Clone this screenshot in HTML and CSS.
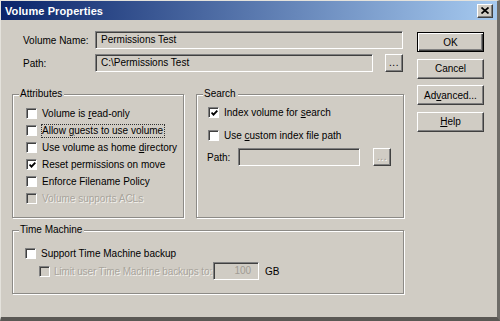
FILE: index.html
```html
<!DOCTYPE html>
<html lang="en">
<head>
    <meta charset="UTF-8">
    <title>Volume Properties</title>
    <link rel="stylesheet" href="styles.css">
</head>
<body>
    <div class="window">
        <div class="titlebar">
            <span class="title">Volume Properties</span>
            <span class="close-btn">
                <svg width="8" height="7" viewBox="0 0 8 7">
                    <path d="M0.5 0.5 L7.5 6.5 M7.5 0.5 L0.5 6.5" stroke="#000" stroke-width="1.7" fill="none"/>
                </svg>
            </span>
        </div>

        <div class="client">
            <div class="main">
                <div class="field-row">
                    <label class="field-label">Volume Name:</label>
                    <div class="textbox name-box">Permissions Test</div>
                </div>
                <div class="field-row path-row">
                    <label class="field-label">Path:</label>
                    <div class="textbox">C:\Permissions Test</div>
                    <button class="btn browse">...</button>
                </div>

                <div class="group-row">
                    <div class="group attributes">
                        <span class="group-title">Attributes</span>
                        <div class="check"><span class="box"></span><span>Volume is <u>r</u>ead-only</span></div>
                        <div class="check"><span class="box"></span><span class="focus">Allow <u>g</u>uests to use volume</span></div>
                        <div class="check"><span class="box"></span><span>Use volume as home <u>d</u>irectory</span></div>
                        <div class="check"><span class="box checked"></span><span>Reset permissions on move</span></div>
                        <div class="check"><span class="box"></span><span>Enforce Filename Policy</span></div>
                        <div class="check disabled"><span class="box"></span><span>Volume supports ACLs</span></div>
                    </div>

                    <div class="group search">
                        <span class="group-title">Search</span>
                        <div class="check"><span class="box checked"></span><span>Index volume for <u>s</u>earch</span></div>
                        <div class="check custom-path"><span class="box"></span><span>Use <u>c</u>ustom index file path</span></div>
                        <div class="search-path">
                            <label class="small-label">Path:</label>
                            <div class="textbox empty"></div>
                            <button class="btn browse" disabled>...</button>
                        </div>
                    </div>
                </div>

                <div class="group time-machine">
                    <span class="group-title">Time Machine</span>
                    <div class="check"><span class="box"></span><span>Support Time Machine backup</span></div>
                    <div class="limit-row">
                        <div class="check disabled"><span class="box"></span><span class="limit-label">Limit user Time Machine backups to:</span></div>
                        <div class="textbox number">100</div>
                        <span class="unit">GB</span>
                    </div>
                </div>
            </div>

            <div class="buttons">
                <button class="btn default">OK</button>
                <button class="btn">Cancel</button>
                <button class="btn">Ad<u>v</u>anced...</button>
                <button class="btn"><u>H</u>elp</button>
            </div>
        </div>
    </div>
</body>
</html>
```

FILE: styles.css
```css
body {
    margin: 0;
    padding: 0;
    background-color: #d0ccc4;
    font-family: "Liberation Sans", Arial, sans-serif;
    font-size: 10px;
    color: #000;
}
.window {
    width: 500px;
    height: 321px;
    box-sizing: border-box;
    background: #d0ccc4;
    border-top: 1px solid #e4e2dc;
    border-left: 1px solid #e4e2dc;
    border-right: 3px solid #6e6c68;
    border-bottom: 4px solid #5a5854;
    display: flex;
    flex-direction: column;
}
.titlebar {
    height: 19px;
    background: linear-gradient(to right, #0a246a, #a6caf0);
    display: flex;
    align-items: center;
    justify-content: space-between;
    padding: 0 4px 0 4px;
    flex-shrink: 0;
}
.title {
    color: #fff;
    font-weight: bold;
    font-size: 11px;
    letter-spacing: 0.1px;
}
.close-btn {
    width: 14px;
    height: 12px;
    background: #d0ccc4;
    border: 1px solid;
    border-color: #fff #404040 #404040 #fff;
    box-shadow: inset -1px -1px 0 #808080;
    display: flex;
    align-items: center;
    justify-content: center;
}
.client {
    display: flex;
    gap: 13px;
    padding: 11px 0 0 11px;
}
.main {
    width: 392px;
}

/* text fields */
.field-row {
    display: flex;
    align-items: center;
    height: 18px;
    padding-right: 1px;
}
.path-row {
    margin-top: 5px;
    gap: 12px;
}
.field-label {
    width: 72px;
    margin-left: 11px;
    margin-right: -12px;
}
.path-row .field-label {
    margin-right: 0;
    width: 60px;
}
.textbox {
    flex: 1;
    height: 18px;
    box-sizing: border-box;
    border: 1px solid;
    border-color: #808080 #fff #fff #808080;
    box-shadow: inset 1px 1px 0 #404040;
    padding: 0 0 0 5px;
    line-height: 16px;
    background: #d0ccc4;
    white-space: nowrap;
}
.name-box {
    margin-left: 12px;
}

/* buttons */
.btn {
    font-family: "Liberation Sans", Arial, sans-serif;
    font-size: 10px;
    color: #000;
    background: #d0ccc4;
    border: 1px solid;
    border-color: #fff #404040 #404040 #fff;
    box-shadow: inset -1px -1px 0 #808080;
    padding: 0;
    height: 20px;
    box-sizing: border-box;
}
.btn.default {
    border-color: #000;
    box-shadow: inset 1px 1px 0 #fff, inset -1px -1px 0 #404040, inset -2px -2px 0 #808080;
}
.btn.browse {
    width: 18px;
    height: 18px;
    flex-shrink: 0;
    line-height: 10px;
    letter-spacing: 0.5px;
}
.btn.browse:disabled {
    color: #a09c94;
    text-shadow: 1px 1px 0 #fff;
}
.buttons {
    width: 67px;
    display: flex;
    flex-direction: column;
    gap: 6.5px;
    margin-top: 1px;
}

/* group boxes */
.group {
    box-sizing: border-box;
    border: 1px solid #8c8a86;
    box-shadow: inset 1px 1px 0 #fff, 1px 1px 0 #fff;
}
.group-title {
    display: block;
    width: fit-content;
    margin: -7px 0 0 6px;
    padding: 0 2px 0 1px;
    background: #d0ccc4;
    line-height: 12px;
}
.group-row {
    display: flex;
    gap: 12px;
    margin-top: 22px;
}
.attributes {
    width: 172px;
    height: 124px;
    padding: 0 0 0 13px;
}
.attributes .group-title {
    margin-left: -7px;
    margin-bottom: 5px;
}
.search {
    width: 208px;
    height: 124px;
    padding: 0 0 0 11px;
}
.search .group-title {
    margin-left: -5px;
    margin-bottom: 4px;
}
.time-machine {
    width: 392px;
    height: 64px;
    margin-top: 12px;
    padding: 0 0 0 12px;
}
.time-machine .group-title {
    margin-left: -6px;
    margin-bottom: 9px;
}

/* checkboxes */
.check {
    display: flex;
    align-items: center;
    gap: 5px;
    height: 17px;
    white-space: nowrap;
}
.box {
    width: 11px;
    height: 11px;
    box-sizing: border-box;
    background: #fff;
    border: 1px solid;
    border-color: #808080 #fff #fff #808080;
    box-shadow: inset 1px 1px 0 #404040;
    flex-shrink: 0;
    display: flex;
    align-items: center;
    justify-content: center;
}
.box.checked::after {
    content: "";
    width: 7px;
    height: 6px;
    background: url("data:image/svg+xml;utf8,<svg xmlns='http://www.w3.org/2000/svg' width='7' height='6' viewBox='0 0 7 6'><path d='M0.5 2.5 L2.5 4.7 L6.3 0.6' stroke='black' stroke-width='1.8' fill='none'/></svg>") no-repeat;
    margin: 1px 0 0 1px;
}
.check.disabled {
    color: #a8a49c;
    text-shadow: 1px 1px 0 #f4f2ee;
}
.check.disabled .box {
    background: #d0ccc4;
}
.focus {
    outline: 1px dotted #333;
    outline-offset: 0;
    padding: 0 1px 0 0;
    line-height: 12px;
}
.custom-path {
    margin-top: 6px;
}
.search-path {
    display: flex;
    align-items: center;
    margin-top: 4px;
    margin-left: -1px;
    height: 18px;
}
.small-label {
    width: 31px;
}
.search-path .textbox {
    flex: none;
    width: 122px;
    margin-right: 13px;
}
.limit-row {
    display: flex;
    align-items: center;
    margin-top: 0;
    padding-left: 14px;
    height: 18px;
}
.limit-row .check {
    gap: 4px;
}
.limit-label {
    letter-spacing: -0.12px;
}
.textbox.number {
    flex: none;
    width: 46px;
    margin-left: 1px;
    text-align: right;
    padding: 0 7px 0 0;
    color: #a09c94;
}
.unit {
    margin-left: 6px;
}
```
